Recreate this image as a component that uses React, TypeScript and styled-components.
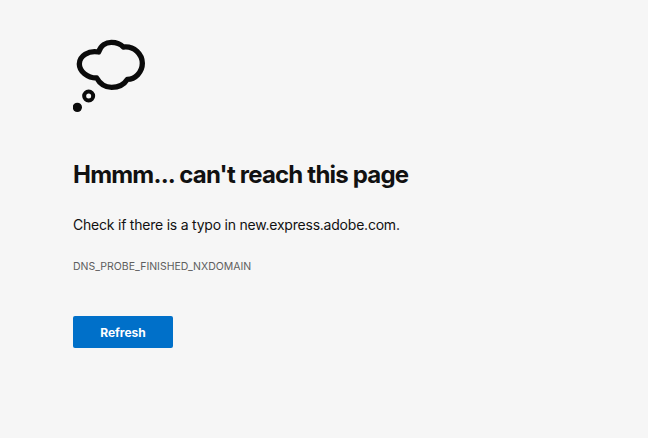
import React from 'react';
import styled, { createGlobalStyle } from 'styled-components';

const GlobalStyle = createGlobalStyle`
  html, body {
    margin: 0;
    height: 100%;
    background: #f6f6f6;
  }
`;

const Page = styled.main`
  display: flex;
  flex-direction: column;
  align-items: flex-start;
  box-sizing: border-box;
  height: 438px;
  padding: 38px 0 0 73px;
  font-family: Inter, "Liberation Sans", sans-serif;
  color: #111111;
`;

const Cloud = styled.svg`
  display: block;
  width: 74px;
  height: 76px;
`;

const Title = styled.h1`
  margin: 46px 0 0;
  font-size: 24px;
  line-height: 30px;
  font-weight: 700;
  letter-spacing: -0.8px;
`;

const Message = styled.p`
  margin: 25px 0 0;
  font-size: 14px;
  line-height: 20px;
  font-weight: 400;
  letter-spacing: -0.22px;
`;

const Code = styled.div`
  margin: 25px 0 0;
  font-size: 10.5px;
  line-height: 14px;
  color: #5e5e5e;
`;

const Refresh = styled.button`
  margin-top: 42px;
  width: 100px;
  height: 32px;
  padding: 0;
  border: none;
  border-radius: 2px;
  background: #0070c9;
  color: #ffffff;
  font-family: inherit;
  font-size: 12px;
  font-weight: 700;
`;

export default function App() {
  return (
    <>
      <GlobalStyle />
      <Page>
        <Cloud viewBox="39 24 222 228" aria-hidden="true">
          <path
            d="M116 66C122 46 138 37 154 37C170 37 182 42 190 51C222 47 247 72 247 100C247 126 226 148 202 148C192 164 174 172 155 172C136 172 120 162 110 144C82 144 58 124 58 102C58 78 86 60 116 66Z"
            fill="none"
            stroke="#0b0b0b"
            strokeWidth="16"
            strokeLinejoin="round"
          />
          <circle cx="86" cy="198" r="13.5" fill="none" stroke="#0b0b0b" strokeWidth="12" />
          <circle cx="52" cy="232" r="14" fill="#0b0b0b" />
        </Cloud>
        <Title>Hmmm... can't reach this page</Title>
        <Message>Check if there is a typo in new.express.adobe.com.</Message>
        <Code>DNS_PROBE_FINISHED_NXDOMAIN</Code>
        <Refresh>Refresh</Refresh>
      </Page>
    </>
  );
}
